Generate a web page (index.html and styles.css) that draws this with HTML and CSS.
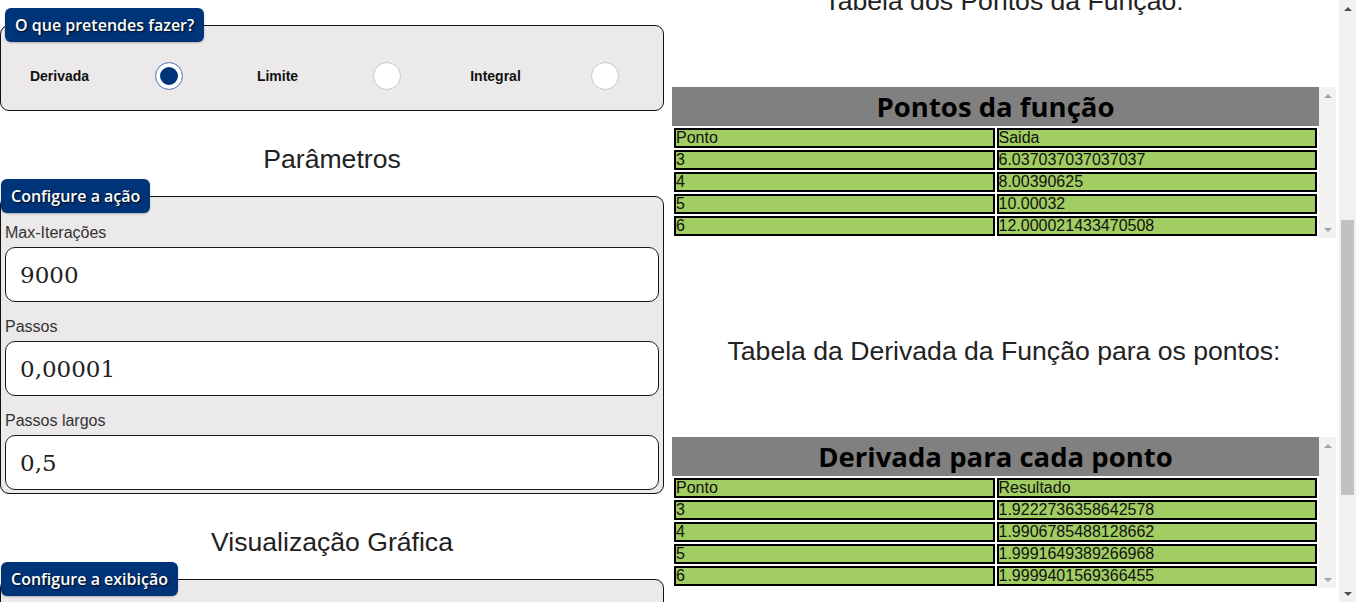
FILE: index.html
```html
<!DOCTYPE html>
<html lang="pt">
<head>
<meta charset="utf-8">
<title>Derivada, Limite e Integral</title>
<link rel="stylesheet" href="styles.css">
</head>
<body>
<div class="page">
  <main class="left">
    <fieldset class="box box-choice">
      <legend class="box-legend">O que pretendes fazer?</legend>
      <div class="options">
        <label class="opt-label" for="op-der">Derivada</label>
        <input class="opt-radio" type="radio" id="op-der" name="acao" checked>
        <label class="opt-label" for="op-lim">Limite</label>
        <input class="opt-radio" type="radio" id="op-lim" name="acao">
        <label class="opt-label" for="op-int">Integral</label>
        <input class="opt-radio" type="radio" id="op-int" name="acao">
      </div>
    </fieldset>

    <h2 class="section-title">Parâmetros</h2>

    <fieldset class="box box-params">
      <legend class="box-legend legend-flush">Configure a ação</legend>
      <label class="field-label" for="f-iter">Max-Iterações</label>
      <input class="field" id="f-iter" type="text" value="9000">
      <label class="field-label" for="f-passo">Passos</label>
      <input class="field" id="f-passo" type="text" value="0,00001">
      <label class="field-label" for="f-largo">Passos largos</label>
      <input class="field" id="f-largo" type="text" value="0,5">
    </fieldset>

    <h2 class="section-title">Visualização Gráfica</h2>

    <fieldset class="box box-display">
      <legend class="box-legend legend-flush">Configure a exibição</legend>
    </fieldset>
  </main>

  <section class="right">
    <h2 class="section-title title-first">Tabela dos Pontos da Função:</h2>
    <div class="table-box">
      <div class="table-area">
        <table class="data">
          <caption>Pontos da função</caption>
          <tr><td>Ponto</td><td>Saida</td></tr>
          <tr><td>3</td><td>6.037037037037037</td></tr>
          <tr><td>4</td><td>8.00390625</td></tr>
          <tr><td>5</td><td>10.00032</td></tr>
          <tr><td>6</td><td>12.000021433470508</td></tr>
        </table>
      </div>
      <div class="inner-scrollbar">
        <div class="sb-btn"><span class="arrow-up arrow-off"></span></div>
        <div class="sb-track"></div>
        <div class="sb-btn"><span class="arrow-down arrow-off"></span></div>
      </div>
    </div>

    <h2 class="section-title title-next">Tabela da Derivada da Função para os pontos:</h2>
    <div class="table-box">
      <div class="table-area">
        <table class="data">
          <caption>Derivada para cada ponto</caption>
          <tr><td>Ponto</td><td>Resultado</td></tr>
          <tr><td>3</td><td>1.9222736358642578</td></tr>
          <tr><td>4</td><td>1.9906785488128662</td></tr>
          <tr><td>5</td><td>1.9991649389266968</td></tr>
          <tr><td>6</td><td>1.9999401569366455</td></tr>
        </table>
      </div>
      <div class="inner-scrollbar">
        <div class="sb-btn"><span class="arrow-up arrow-off"></span></div>
        <div class="sb-track"></div>
        <div class="sb-btn"><span class="arrow-down arrow-off"></span></div>
      </div>
    </div>
  </section>

  <div class="page-scrollbar">
    <div class="sb-btn"><span class="arrow-up"></span></div>
    <div class="sb-track"><div class="sb-thumb"></div></div>
    <div class="sb-btn"><span class="arrow-down"></span></div>
  </div>
</div>
</body>
</html>
```

FILE: styles.css
```css
html, body {
  margin: 0;
  padding: 0;
  background: #fff;
}

body {
  font-family: "Liberation Sans", Arial, sans-serif;
  color: #222;
  overflow: hidden;
}

.page {
  display: flex;
  align-items: flex-start;
  height: 602px;
  overflow: hidden;
}

.left {
  flex: none;
  width: 664px;
  padding-top: 8px;
}

.right {
  flex: none;
  width: 664px;
  margin-left: 8px;
}

/* ---------- fieldsets ---------- */
.box {
  box-sizing: border-box;
  width: 664px;
  margin: 0;
  border: 1px solid #111;
  border-radius: 9px;
  background: #ebe9ea;
  padding: 20px 4px 20px;
  min-inline-size: 0;
}

.box-legend {
  background: #003478;
  color: #fff;
  font-family: "Open Sans", "Liberation Sans", sans-serif;
  font-weight: 600;
  font-size: 16px;
  line-height: 20px;
  padding: 7px 10px;
  border-radius: 6px;
  text-shadow: 1px 1px 2px rgba(0, 0, 0, 0.85);
  box-shadow: 0 1px 2px rgba(0, 0, 0, 0.25);
}

.legend-flush {
  margin-left: -4px;
}

.options {
  display: grid;
  grid-template-columns: repeat(6, 1fr);
  align-items: center;
  justify-items: center;
  height: 28px;
}

.opt-label {
  font-family: "Liberation Sans", Arial, sans-serif;
  font-weight: 700;
  font-size: 14px;
  color: #111;
}

.opt-radio {
  appearance: none;
  -webkit-appearance: none;
  margin: 0;
  width: 28px;
  height: 28px;
  border-radius: 50%;
  border: 1px solid #c8c8c8;
  background: #fff;
  box-sizing: border-box;
}

.opt-radio:checked {
  border-color: #7d98c8;
  background: #003478;
  box-shadow: inset 0 0 0 4px #fff;
}

.box-params {
  padding: 11px 4px 3px;
}

.field-label {
  display: block;
  font-size: 16px;
  line-height: 18px;
  color: #333;
  margin: 16px 0 5px;
}

.box-params .field-label:first-of-type {
  margin-top: 0;
}

.field {
  display: block;
  box-sizing: border-box;
  width: 100%;
  height: 55px;
  margin: 0;
  border: 1px solid #1a1a1a;
  border-radius: 10px;
  background: #fff;
  padding: 0 14px;
  font-family: "DejaVu Serif", "Liberation Serif", serif;
  font-size: 23px;
  color: #222;
  outline: none;
}

.box-display {
  height: 200px;
}

/* ---------- headings ---------- */
.section-title {
  margin: 33px 0 5px;
  font-family: "Liberation Sans", Arial, sans-serif;
  font-weight: 400;
  font-size: 26.6px;
  line-height: 30px;
  text-align: center;
  color: #222;
}

.title-first {
  margin: -14px 0 71px;
}

.title-next {
  margin: 98px 0 71px;
}

/* ---------- tables ---------- */
.table-box {
  display: flex;
  height: 151px;
  overflow: hidden;
}

.table-area {
  flex: none;
  width: 647px;
}

.data {
  width: 647px;
  border-collapse: separate;
  border-spacing: 2px;
  table-layout: fixed;
}

.data caption {
  background: #808080;
  height: 39px;
  font-family: "Open Sans", "Liberation Sans", sans-serif;
  font-weight: 700;
  font-size: 27.5px;
  line-height: 40px;
  color: #000;
  text-align: center;
}

.data td {
  width: 50%;
  background: #a1cd63;
  border: 2px solid #000;
  padding: 0;
  font-size: 16px;
  line-height: 16px;
  color: #111;
  text-align: left;
  white-space: nowrap;
  overflow: hidden;
}

/* ---------- scrollbars ---------- */
.inner-scrollbar,
.page-scrollbar {
  flex: none;
  width: 17px;
  background: #f1f1f1;
  display: flex;
  flex-direction: column;
}

.page-scrollbar {
  height: 602px;
  margin-left: 3px;
}

.sb-btn {
  height: 17px;
  display: flex;
  align-items: center;
  justify-content: center;
}

.sb-track {
  flex: 1;
}

.sb-thumb {
  width: 13px;
  height: 275px;
  margin: 203px 2px 0;
  background: #c1c1c1;
}

.arrow-up,
.arrow-down {
  width: 0;
  height: 0;
  border-left: 4px solid transparent;
  border-right: 4px solid transparent;
}

.arrow-up {
  border-bottom: 4px solid #505050;
}

.arrow-down {
  border-top: 4px solid #505050;
}

.arrow-up.arrow-off {
  border-bottom-color: #a3a3a3;
}

.arrow-down.arrow-off {
  border-top-color: #a3a3a3;
}
```
